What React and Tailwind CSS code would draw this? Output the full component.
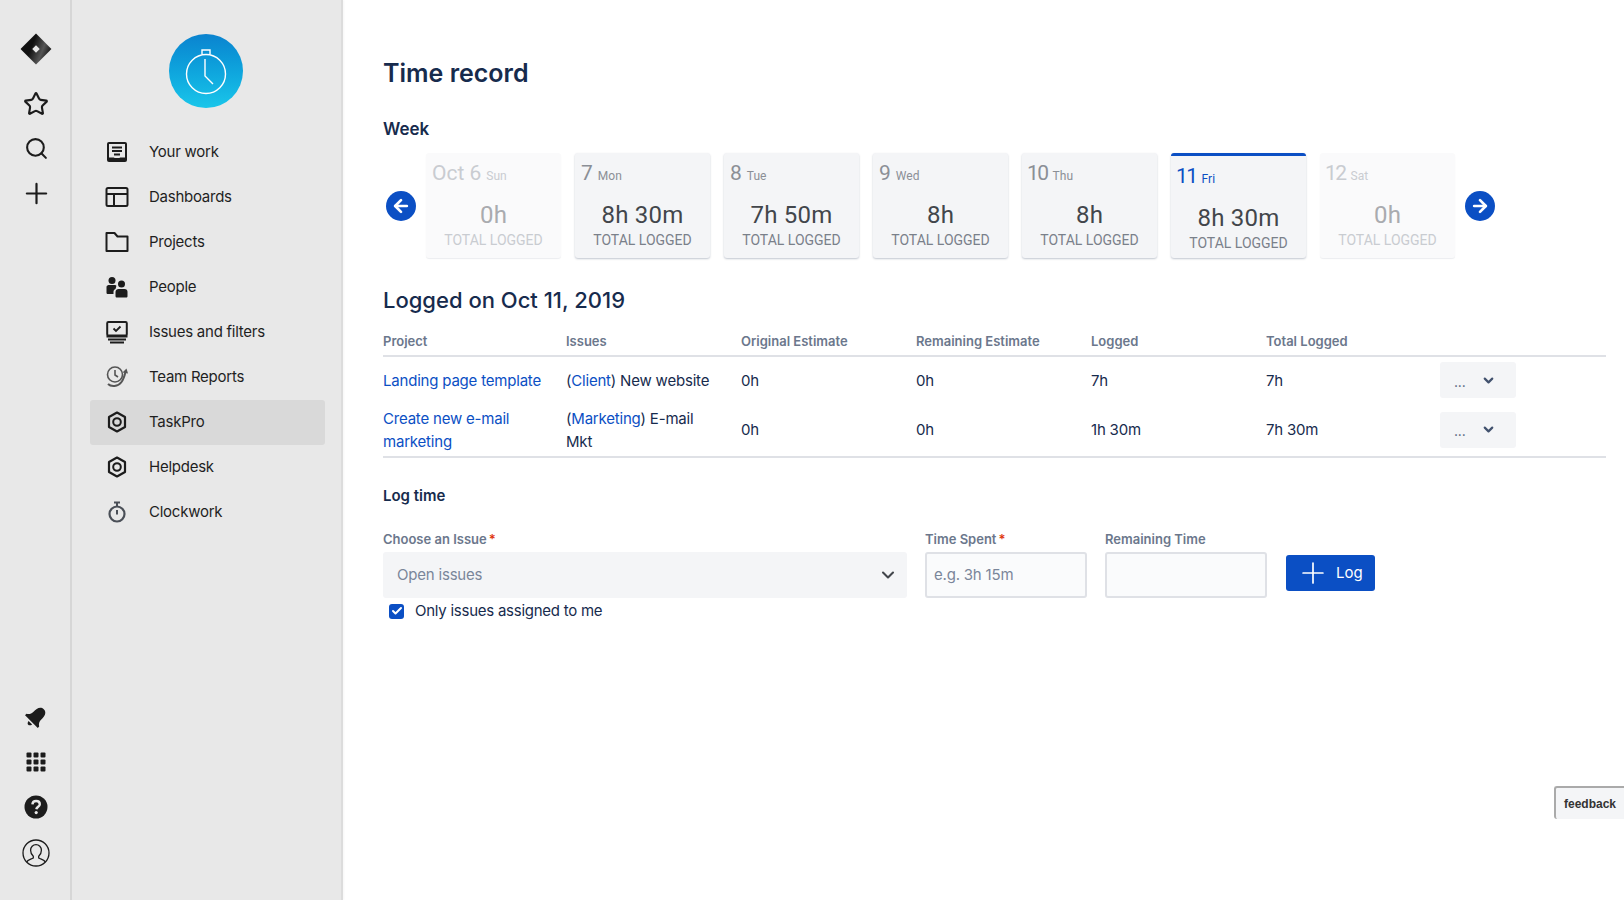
import React from "react";
import { ChevronDown, Star, Search, Plus, ArrowLeft, ArrowRight, Check } from "lucide-react";

const Logo = () => (
  <svg width="32" height="32" viewBox="0 0 30 30">
    <defs>
      <linearGradient id="lg" x1="0" y1="0" x2="1" y2="0.4">
        <stop offset="0.45" stopColor="#111" />
        <stop offset="0.8" stopColor="#555" />
        <stop offset="1" stopColor="#222" />
      </linearGradient>
    </defs>
    <path d="M15 0.5 L29.5 15 L15 29.5 L0.5 15 Z" fill="url(#lg)" />
    <path d="M15 11.5 L18.5 15 L15 18.5 L11.5 15 Z" fill="#e8e8e8" />
  </svg>
);

const BellIcon = () => (
  <svg width="24" height="24" viewBox="0 0 24 24" fill="#1c1c1c">
    <g transform="rotate(45 12 12)">
      <path d="M12 1 C7 1 6.5 6 6.5 10 C6.5 13 5.5 15 3 16.5 V18.5 H21 V16.5 C18.5 15 17.5 13 17.5 10 C17.5 6 17 1 12 1 Z" />
      <path d="M9.5 20 H14.5 C14.3 22 13 23 12 23 C11 23 9.7 22 9.5 20 Z" />
    </g>
  </svg>
);

const GridIcon = () => (
  <svg width="20" height="20" viewBox="0 0 20 20" fill="#1c1c1c">
    {[0, 7, 14].flatMap((y) =>
      [0, 7, 14].map((x) => <rect key={`${x}-${y}`} x={x + 0.5} y={y + 0.5} width="5" height="5" rx="1" />)
    )}
  </svg>
);

const HelpIcon = () => (
  <svg width="24" height="24" viewBox="0 0 24 24">
    <circle cx="12" cy="12" r="11.5" fill="#1c1c1c" />
    <path d="M8.4 9.4 C8.6 7.2 10.2 6 12.1 6 C14.2 6 15.8 7.3 15.8 9.2 C15.8 11.6 12.7 11.7 12.3 14.2" fill="none" stroke="#e8e8e8" strokeWidth="2.4" />
    <circle cx="12.2" cy="17.6" r="1.6" fill="#e8e8e8" />
  </svg>
);

const UserIcon = () => (
  <svg width="28" height="28" viewBox="0 0 28 28" fill="none" stroke="#1c1c1c" strokeWidth="1.3">
    <circle cx="14" cy="14" r="13" />
    <path d="M4.8 23 C5.5 20.4 9.2 20.4 11.3 19 L11.3 17.2 C9.5 15.6 8.6 13.4 8.6 11.2 C8.6 8 11 5.6 14 5.6 C17 5.6 19.4 8 19.4 11.2 C19.4 13.4 18.5 15.6 16.7 17.2 L16.7 19 C18.8 20.4 22.5 20.4 23.2 23" />
  </svg>
);

const WorkIcon = () => (
  <svg width="24" height="24" viewBox="0 0 24 24">
    <path d="M4 2 H20 A2 2 0 0 1 22 4 V20 A2 2 0 0 1 20 22 H4 A2 2 0 0 1 2 20 V4 A2 2 0 0 1 4 2 Z" fill="#1c1c1c" />
    <rect x="4" y="4" width="16" height="14" fill="#e8e8e8" />
    <path d="M7 7.5 H17 M7 11 H17 M9 14.5 H15" stroke="#1c1c1c" strokeWidth="1.8" />
    <path d="M4 17.5 H9 L10.5 19 H13.5 L15 17.5 H20 V18.5 H4 Z" fill="#1c1c1c" />
  </svg>
);

const DashIcon = () => (
  <svg width="24" height="24" viewBox="0 0 24 24" fill="none" stroke="#1c1c1c" strokeWidth="2">
    <rect x="1.5" y="3" width="21" height="18" rx="1.5" />
    <path d="M1.5 9 H22.5 M9 9 V21" />
  </svg>
);

const FolderIcon = () => (
  <svg width="24" height="24" viewBox="0 0 24 24" fill="none" stroke="#1c1c1c" strokeWidth="2" strokeLinejoin="round">
    <path d="M1.5 3 H9.5 L12.5 6.5 H22.5 V21 H1.5 Z" />
  </svg>
);

const PeopleIcon = () => (
  <svg width="24" height="24" viewBox="0 0 24 24" fill="#1c1c1c">
    <circle cx="7" cy="5.5" r="3.5" />
    <circle cx="16.5" cy="9" r="3.5" />
    <path d="M1.5 12 C1.5 10.5 3 10 4.5 10 H9.5 C10.5 10 11 10.3 11.4 10.8 C11 12 11 13 10.5 14 C9 14.5 8.5 15.5 8.5 17 V19 H3 C2 19 1.5 18.5 1.5 17.5 Z" />
    <path d="M10.5 17 C10.5 15 12 14 13.5 14 H19.5 C21.5 14 22.5 15 22.5 17 V21 C22.5 22 22 22.5 21 22.5 H12 C11 22.5 10.5 22 10.5 21 Z" />
  </svg>
);

const IssuesIcon = () => (
  <svg width="24" height="24" viewBox="0 0 24 24">
    <rect x="2.2" y="2" width="19.6" height="13.5" rx="1.2" fill="none" stroke="#1c1c1c" strokeWidth="2" />
    <path d="M8.5 8.5 L11 11 L15.5 6.5" fill="none" stroke="#1c1c1c" strokeWidth="1.8" />
    <path d="M1.5 16.5 H22.5 M3 19.5 H21 M5 22.5 H19" stroke="#1c1c1c" strokeWidth="1.8" />
  </svg>
);

const ReportsIcon = () => (
  <svg width="24" height="24" viewBox="0 0 24 24" fill="none" stroke="#555" strokeWidth="1.6">
    <circle cx="10" cy="9.5" r="7.5" />
    <path d="M10 5 V10 L13 12" />
    <path d="M3 19 C6 22 13 22 16.5 17 C18 15 19.5 11 20.5 7" strokeWidth="2" />
    <path d="M17.5 7.5 L21.5 3.5 L23 8.5 Z" fill="#555" stroke="none" />
  </svg>
);

const HexIcon = () => (
  <svg width="24" height="24" viewBox="0 0 24 24" fill="none" stroke="#1c1c1c">
    <path d="M12 2.5 L20 7 V17 L12 21.5 L4 17 V7 Z" strokeWidth="2.2" strokeLinejoin="round" />
    <circle cx="12" cy="12" r="3.8" strokeWidth="2" />
  </svg>
);

const ClockworkIcon = () => (
  <svg width="24" height="24" viewBox="0 0 24 24" fill="none" stroke="#4a4f57">
    <circle cx="12" cy="14" r="7.5" strokeWidth="2.2" />
    <path d="M9 2.5 H15" strokeWidth="2" />
    <path d="M12 3 V6" strokeWidth="2" />
    <path d="M12 10 V14.5" strokeWidth="2" />
  </svg>
);

const railTop = [<Star key="s" size={26} strokeWidth={2} color="#1c1c1c" />, <Search key="q" size={25} strokeWidth={2} color="#1c1c1c" />, <Plus key="p" size={33} strokeWidth={1.6} color="#1c1c1c" />];
const railBottom = [<BellIcon key="b" />, <GridIcon key="g" />, <HelpIcon key="h" />, <UserIcon key="u" />];

const navItems = [
  ["Your work", <WorkIcon />],
  ["Dashboards", <DashIcon />],
  ["Projects", <FolderIcon />],
  ["People", <PeopleIcon />],
  ["Issues and filters", <IssuesIcon />],
  ["Team Reports", <ReportsIcon />],
  ["TaskPro", <HexIcon />, true],
  ["Helpdesk", <HexIcon />],
  ["Clockwork", <ClockworkIcon />],
];

const days = [
  { d: "Oct 6", w: "Sun", v: "0h", off: true },
  { d: "7", w: "Mon", v: "8h 30m" },
  { d: "8", w: "Tue", v: "7h 50m" },
  { d: "9", w: "Wed", v: "8h" },
  { d: "10", w: "Thu", v: "8h", tight: true },
  { d: "11", w: "Fri", v: "8h 30m", active: true, tight: true },
  { d: "12", w: "Sat", v: "0h", off: true, tight: true },
];

function DayCard({ d, w, v, off, active, tight }) {
  return (
    <div
      className={`w-[135px] h-[105px] rounded-[3px] px-[6px] flex flex-col ${
        off ? "bg-[#fafafb] shadow-[0_1px_1px_rgba(9,30,66,0.08)]" : "bg-[#f4f5f7] shadow-[0_1px_2px_rgba(9,30,66,0.25)]"
      } ${active ? "border-t-[3px] border-[#0b4fc4]" : ""}`}
    >
      <div className="h-[47px] flex items-baseline pt-[5px] gap-[5px] font-['Roboto',sans-serif]">
        <span className={`text-[21px] leading-[30px] ${tight ? "tracking-[-1.5px] -ml-[1px]" : ""} ${off ? "text-[#c9ccd1]" : active ? "text-[#0b4fc4]" : "text-[#8b8f96]"}`}>{d}</span>
        <span className={`text-[12px] ${off ? "text-[#c9ccd1]" : active ? "text-[#0b4fc4]" : "text-[#8b8f96]"}`}>{w}</span>
      </div>
      <div className={`text-center text-[24px] leading-[30px] font-['Roboto',sans-serif] tracking-[0.2px] ${off ? "text-[#a9abaf]" : "text-[#42464b]"}`}>{v}</div>
      <div className={`text-center text-[14px] leading-[20px] font-['Roboto',sans-serif] ${off ? "text-[#c9ccd1]" : "text-[#7a808a]"}`}>TOTAL LOGGED</div>
    </div>
  );
}

function RoundArrow({ children }) {
  return (
    <div className="w-[30px] h-[30px] rounded-full bg-[#0b4fc4] flex items-center justify-center shrink-0">{children}</div>
  );
}

const cols = "grid grid-cols-[183px_175px_175px_175px_175px_174px_76px]";

function Row({ project, issue, orig, rem, logged, total, h, border }) {
  return (
    <div className={`${cols} items-center text-[15px] tracking-[-0.2px] leading-[23px] text-[#172b4d] ${h} ${border ? "border-b-2 border-[#dfe1e6]" : ""}`}>
      <div className="text-[#0b4fc4] pr-2">{project}</div>
      <div className="pr-[24px]">{issue}</div>
      <div>{orig}</div>
      <div>{rem}</div>
      <div>{logged}</div>
      <div>{total}</div>
      <div className="h-[36px] bg-[#f4f5f7] rounded-[3px] flex items-center pl-[14px] gap-[15px] text-[#505f79] text-[14px]">
        <span className="leading-[36px] pt-[3px]">...</span>
        <ChevronDown size={15} strokeWidth={3.5} color="#42526e" />
      </div>
    </div>
  );
}

function Field({ label, req, className, children }) {
  return (
    <div className={className}>
      <div className="h-[23px] text-[13px] leading-[20px] font-semibold text-[#6b778c]">
        {label}
        {req && <span className="text-[#de350b] ml-[2px]">*</span>}
      </div>
      {children}
    </div>
  );
}

export default function App() {
  return (
    <div className="flex h-[900px] w-[1624px] overflow-hidden bg-white font-['Inter',sans-serif] text-[#172b4d]">
      <aside className="w-[72px] shrink-0 bg-[#e8e8e8] border-r-2 border-[#d6d6d6] flex flex-col justify-between items-center pt-[26px] pb-[25px] pl-[2px]">
        <div className="flex flex-col items-center">
          <div className="h-[45px] mb-[10px] flex items-center justify-center"><Logo /></div>
          {railTop.map((ic, i) => (
            <div key={i} className="h-[45px] flex items-center justify-center">{ic}</div>
          ))}
        </div>
        <div className="flex flex-col items-center">
          {railBottom.map((ic, i) => (
            <div key={i} className={`flex items-center justify-center ${i === 2 ? "h-[46px]" : "h-[45px]"}`}>{ic}</div>
          ))}
        </div>
      </aside>

      <nav className="w-[271px] shrink-0 bg-[#e8e8e8] border-r-2 border-[#dcdcdc] pl-[18px] pt-[34px] shadow-[1px_0_2px_rgba(0,0,0,0.04)]">
        <div className="w-[231px] flex justify-center mb-[22px]">
          <div className="w-[74px] h-[74px] rounded-full bg-gradient-to-b from-[#0b83cf] to-[#1ac6ea] flex items-center justify-center">
            <svg width="44" height="48" viewBox="0 0 44 48" fill="none" stroke="#fff" strokeWidth="1.4">
              <circle cx="22" cy="27" r="19.5" />
              <path d="M18 7 V3 H26 V7" />
              <path d="M21 12 V29 L29 37" />
            </svg>
          </div>
        </div>
        {navItems.map(([label, icon, active]) => (
          <div key={label} className={`w-[235px] h-[45px] flex items-center rounded-[3px] pl-[15px] ${active ? "bg-[#d9d9d9]" : ""}`}>
            <span className="w-[24px] h-[24px] mr-[20px] -mt-[2px] flex items-center justify-center">{icon}</span>
            <span className="text-[15px] tracking-[-0.25px] text-[#1f1f1f]">{label}</span>
          </div>
        ))}
      </nav>

      <main className="flex-1 relative pl-[40px] pr-[18px] pt-[55px]">
        <h1 className="text-[25px] leading-[36px] font-semibold text-[#172b4d]">Time record</h1>
        <h2 className="mt-[26px] text-[17px] leading-[24px] font-semibold text-[#172b4d]">Week</h2>
        <div className="mt-[12px] flex items-center gap-[10px] pl-[3px] h-[105px]">
          <RoundArrow><ArrowLeft size={20} strokeWidth={3.2} color="#fff" /></RoundArrow>
          <div className="flex gap-[14px]">
            {days.map((x) => <DayCard key={x.w} {...x} />)}
          </div>
          <RoundArrow><ArrowRight size={20} strokeWidth={3.2} color="#fff" /></RoundArrow>
        </div>

        <h2 className="mt-[27px] text-[22px] leading-[30px] font-medium text-[#172b4d]">Logged on Oct 11, 2019</h2>

        <div className={`${cols} mt-[15px] h-[27px] items-center border-b-2 border-[#dfe1e6] pb-[1px] text-[13px] font-semibold text-[#6b778c]`}>
          {["Project", "Issues", "Original Estimate", "Remaining Estimate", "Logged", "Total Logged", ""].map((t, i) => <div key={i}>{t}</div>)}
        </div>
        <Row h="h-[46px]" project="Landing page template" issue={<>(<span className="text-[#0b4fc4]">Client</span>) New website</>} orig="0h" rem="0h" logged="7h" total="7h" />
        <Row h="h-[55px]" border project="Create new e-mail marketing" issue={<>(<span className="text-[#0b4fc4]">Marketing</span>) E-mail Mkt</>} orig="0h" rem="0h" logged="1h 30m" total="7h 30m" />

        <h3 className="mt-[26px] text-[15px] leading-[24px] font-semibold text-[#172b4d]">Log time</h3>

        <div className="mt-[21px] flex items-start">
          <Field label="Choose an Issue" req className="w-[524px] mr-[18px]">
            <div className="h-[46px] rounded-[3px] bg-[#f4f5f7] flex items-center justify-between pl-[14px] pr-[9px] text-[15px] tracking-[-0.2px] text-[#7a869a]">
              <span>Open issues</span>
              <ChevronDown size={20} strokeWidth={2.5} color="#42464b" />
            </div>
          </Field>
          <Field label="Time Spent" req className="w-[162px] mr-[18px]">
            <div className="h-[46px] rounded-[3px] bg-[#fafbfc] border-2 border-[#dfe1e6] flex items-center pl-[7px] text-[15px] tracking-[-0.2px] text-[#7a869a]">e.g. 3h 15m</div>
          </Field>
          <Field label="Remaining Time" className="w-[162px] mr-[19px]">
            <div className="h-[46px] rounded-[3px] bg-[#fafbfc] border-2 border-[#dfe1e6]" />
          </Field>
          <div className="mt-[26px] w-[89px] h-[36px] rounded-[3px] bg-[#0b4fc4] flex items-center pl-[10px] gap-[6px] text-white text-[15px]">
            <Plus size={34} strokeWidth={1.2} color="#fff" className="shrink-0" />
            <span>Log</span>
          </div>
        </div>

        <div className="mt-[2px] ml-[6px] flex items-center h-[22px] gap-[11px] text-[15px] tracking-[-0.25px] text-[#172b4d]">
          <span className="w-[15px] h-[15px] rounded-[3px] bg-[#0b4fc4] flex items-center justify-center">
            <Check size={12} strokeWidth={4} color="#fff" />
          </span>
          <span>Only issues assigned to me</span>
        </div>

        <div className="absolute right-0 top-[786px] w-[70px] h-[33px] bg-[#f4f5f7] border-l-2 border-t-2 border-[#aaaaaa] rounded-tl-[3px] rounded-bl-[3px] flex items-center justify-center text-[12px] font-bold text-[#333] font-['Liberation_Sans',sans-serif]">
          feedback
        </div>
      </main>
    </div>
  );
}
